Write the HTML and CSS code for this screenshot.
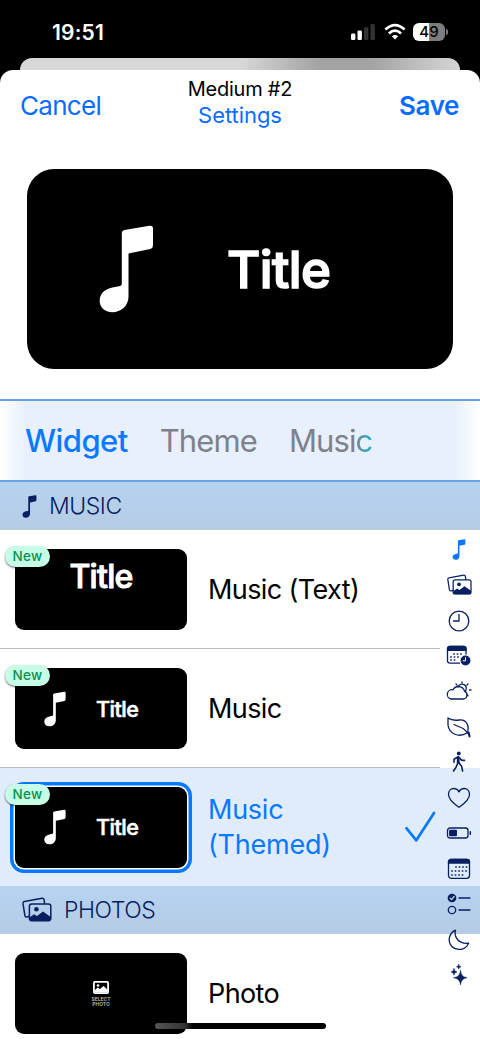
FILE: index.html
```html
<!DOCTYPE html>
<html lang="en">
<head>
<meta charset="utf-8">
<title>Widget settings</title>
<link rel="stylesheet" href="styles.css">
</head>
<body>
<svg class="defs" width="0" height="0">
  <symbol id="note" viewBox="298 194 164 262"><path fill="currentColor" d="M366 218Q366 211 374 209L448 196Q459 194 459 204V255Q459 263 451 265L386 279V408C386 436 363 454 338 454C315 454 300 440 300 420C300 398 315 384 338 380L361 376Q366 375 366 370Z"/></symbol>
  <symbol id="photos" viewBox="0 0 30 26">
    <path d="M7 19.5 4.6 20Q3.2 20.2 2.9 18.7L1 6.6Q.8 4.8 2.4 4.5L20 1.2Q21.6 1 22 2.5L22.6 6.2" fill="none" stroke="currentColor" stroke-width="1.5" stroke-linecap="round"/>
    <rect x="7.4" y="6.9" width="21.4" height="16.8" rx="2.4" fill="none" stroke="currentColor" stroke-width="1.5"/>
    <circle cx="14.4" cy="12.2" r="2.3" fill="currentColor"/>
    <path d="M7.5 20.5 12 17.2 15 19 21 14.5 28.8 20V22Q28.5 24 26.5 24H10Q7.5 24 7.5 21.5Z" fill="currentColor"/>
  </symbol>
</svg>
<div class="screen">
  <div class="status">
    <span class="clock">19:51</span>
    <div class="indicators">
      <svg width="26" height="18" viewBox="0 0 26 18"><rect x="1" y="10.5" width="4.4" height="6.5" rx="1.3" fill="#fff"/><rect x="7.5" y="7.5" width="4.4" height="9.5" rx="1.3" fill="#fff"/><rect x="14" y="4.3" width="4.4" height="12.7" rx="1.3" fill="#333"/><rect x="20.5" y="1" width="4.4" height="16" rx="1.3" fill="#333"/></svg>
      <svg width="22" height="18" viewBox="0 0 22 18" fill="none" stroke="#fff" stroke-width="2.7"><path d="M1.4 6.5Q11-2.2 20.6 6.5"/><path d="M4.9 10.4Q11 4.8 17.1 10.4"/><path d="M11 16.5 7.8 13.3Q11 10.6 14.2 13.3Z" fill="#fff" stroke="none"/></svg>
      <div class="battery"><span class="level">49</span><i></i></div>
    </div>
  </div>
  <div class="backsheet"></div>
  <main class="sheet">
    <header class="nav">
      <span class="cancel">Cancel</span>
      <div class="heading"><span class="size">Medium #2</span><span class="settings">Settings</span></div>
      <span class="save">Save</span>
    </header>
    <section class="hero">
      <svg class="heronote" width="55" height="88"><use href="#note"/></svg>
      <span class="herotitle">Title</span>
    </section>
    <nav class="tabs"><span class="on">Widget</span><span class="theme">Theme</span><span class="music">Musi<b>c</b></span></nav>
    <h2 class="section"><svg class="sn" width="15" height="23"><use href="#note"/></svg><span class="stitle">MUSIC</span></h2>
    <div class="row">
      <div class="thumb textonly"><span>Title</span><em class="badge">New</em></div>
      <span class="label l1">Music (Text)</span>
    </div>
    <div class="row">
      <div class="thumb"><svg class="tn" width="22" height="36"><use href="#note"/></svg><span class="tt">Title</span><em class="badge">New</em></div>
      <span class="label">Music</span>
    </div>
    <div class="row selected">
      <div class="thumb"><svg class="tn" width="22" height="36"><use href="#note"/></svg><span class="tt">Title</span><em class="badge">New</em></div>
      <span class="label">Music<br>(Themed)</span>
      <svg class="check" width="32" height="32" viewBox="0 0 32 32"><path d="M2.4 17.2 12.3 29.3 30 2" fill="none" stroke="#0a78ff" stroke-width="2.7" stroke-linecap="round" stroke-linejoin="round"/></svg>
    </div>
    <h2 class="section"><svg width="30" height="26"><use href="#photos"/></svg><span class="stitle wide">PHOTOS</span></h2>
    <div class="row last">
      <div class="thumb photo">
        <svg width="16" height="13" viewBox="0 0 16 13"><rect x=".9" y=".9" width="14.2" height="11.2" rx="1" fill="none" stroke="#fff" stroke-width="1.8"/><circle cx="5" cy="4.5" r="1.3" fill="#fff"/><path d="M1.5 9.5 4.6 6.6 7 8 10.5 5 14.5 8.5V11.5H1.5Z" fill="#fff"/></svg>
        <small>SELECT<br>PHOTO</small>
      </div>
      <span class="label">Photo</span>
    </div>
  </main>
  <aside class="rail">
    <div><svg class="blue" width="14" height="21"><use href="#note"/></svg></div>
    <div><svg width="25" height="22"><use href="#photos"/></svg></div>
    <div><svg width="22" height="22" viewBox="0 0 22 22"><circle cx="11" cy="11" r="9.8"/><path d="M11 4.5V11H5.5"/></svg></div>
    <div><svg width="26" height="22" viewBox="0 0 26 22"><path d="M13.5 18.2H4Q1.5 18.2 1.5 15.8V4Q1.5 1.5 4 1.5H17.5Q20 1.5 20 4V9"/><path class="f" d="M1.5 5.3V3.8Q1.5 1.3 4 1.3H17.5Q20 1.3 20 3.8V5.3Z"/><path class="dots" d="M8 9H18M5 12H14M5 15H12"/><circle class="f" cx="19.5" cy="15.5" r="4.3"/><path d="M19.5 12.7V15.8H17" stroke="#fff" stroke-width="1"/></svg></div>
    <div><svg width="26" height="20" viewBox="0 0 26 20"><path d="M5 18H17.5A4.1 4.1 0 0 0 18.5 10.2A6.2 6.2 0 0 0 7 8.8A4.7 4.7 0 0 0 5 18Z"/><path d="M12 6A4.3 4.3 0 1 1 19.5 10M16 1V2M22 3 21 4M25 9H23.6M22 14.8 21 13.8M10 3 11 4"/></svg></div>
    <div><svg width="26" height="22" viewBox="0 0 26 22"><path d="M2 2Q6 5 13 4C21 3 24 11 21 17C13 22 3 18 2 9Z"/><path d="M8 8.5Q11 10 15 11.5T23.5 19.5"/><path d="m22.7 16.5.8 4" stroke-width="2"/></svg></div>
    <div><svg width="16" height="22" viewBox="0 0 16 22"><circle class="f" cx="7.8" cy="2.4" r="1.3"/><path d="M7.3 6.4 7.2 11.6" stroke-width="2.8"/><path d="M6.4 6.2 3 8.3V11.3M8.7 7 10.6 9.1 13.5 9.4M6.7 12.2 5.2 16 2.5 20M8 12 10.6 15.2 11.6 20" stroke-width="1.6"/></svg></div>
    <div><svg width="24" height="22" viewBox="0 0 24 22"><path d="M12 20.3C8 17.5 1.5 13.2 1.5 7.5C1.5 4 3.7 1.5 6.8 1.5C9.2 1.5 11 2.9 12 4.9C13 2.9 14.8 1.5 17.2 1.5C20.3 1.5 22.5 4 22.5 7.5C22.5 13.2 16 17.5 12 20.3Z"/></svg></div>
    <div><svg width="26" height="14" viewBox="0 0 26 14"><rect x="1.5" y="2" width="20.5" height="10" rx="2.5"/><rect class="f" x="3.8" y="4.3" width="6.5" height="5.4" rx=".4"/><path d="M24.3 5.7V8.3" stroke-width="1.5"/></svg></div>
    <div><svg width="24" height="22" viewBox="0 0 24 22"><rect x="1.5" y="1.3" width="21" height="19" rx="2.8"/><path class="f" d="M1.5 5V4Q1.5 1.5 4 1.5H20Q22.5 1.5 22.5 4V5Z"/><path class="dots" d="M9 9H20M5 13H20M5 17H16"/></svg></div>
    <div><svg width="24" height="22" viewBox="0 0 24 22"><circle class="f" cx="5" cy="5" r="3.7"/><path d="m3.2 5.2 1.4 1.4L7 3.5" stroke="#b6d0ec"/><circle cx="5" cy="17" r="3.7"/><path d="M12 5H23M12 17H23"/></svg></div>
    <div><svg width="22" height="22" viewBox="0 0 22 22"><path d="M7.5 1.2C5.5 8.3 11 15.3 20.6 14.2C18.5 19 14 20.8 9.5 20.2C2.8 19.2-.2 12.7 1.8 7.2C2.9 4.2 4.9 2.3 7.5 1.2Z"/></svg></div>
    <div><svg width="18" height="22" viewBox="0 0 18 22"><path class="f star" d="M10.5 6.5Q11 13 17 13.7Q11 14.4 10.5 21Q10 14.4 3.5 13.7Q10 13 10.5 6.5ZM4 4.5Q4.3 7.5 7 7.9Q4.3 8.3 4 11.2Q3.7 8.3 1 7.9Q3.7 7.5 4 4.5ZM8.7.5Q8.9 2.5 11 2.8Q8.9 3.1 8.7 5Q8.5 3.1 6.5 2.8Q8.5 2.5 8.7.5Z"/></svg></div>
  </aside>
  <div class="home"></div>
</div>
</body>
</html>
```
FILE: styles.css
```css
* { box-sizing: border-box; }
body { margin: 0; background: #fff; font-family: Inter, "Liberation Sans", sans-serif; }
.defs { position: absolute; }
svg { display: block; flex: none; }
.screen { position: relative; width: 480px; height: 1039px; overflow: hidden; background: #000; display: flex; flex-direction: column; }
.status { height: 58px; flex: none; display: flex; justify-content: space-between; padding: 20px 32px 0 52px; color: #fff; }
.clock { font-size: 21px; line-height: 25px; font-weight: 600; letter-spacing: 0.2px; }
.indicators { display: flex; align-items: flex-start; padding-top: 3px; gap: 7px; }
.battery { display: flex; align-items: center; height: 18px; }
.level { width: 32px; height: 18px; border-radius: 6px; background: linear-gradient(90deg, #fff 50%, #7d7d7d 50%); color: #000; font-size: 15px; line-height: 18px; font-weight: 500; text-align: center; }
.battery i { width: 2px; height: 6px; margin-left: 1px; border-radius: 0 2px 2px 0; background: #777; }
.indicators svg:first-child { margin-right: 1px; }
.backsheet { height: 12px; flex: none; margin: 0 20px; border-radius: 13px 13px 0 0; background: linear-gradient(90deg, #d8d8d8 0 50%, #a3a3a3 68% 80%, #bebebe 90%, #d5d5d5); }
.sheet { flex: 1; background: #fff; border-radius: 13px 13px 0 0; display: flex; flex-direction: column; overflow: hidden; }
.nav { height: 99px; flex: none; display: grid; grid-template-columns: 120px 1fr 120px; color: #0a6cff; line-height: 36px; padding: 0 20px; }
.cancel { font-size: 26px; letter-spacing: -0.7px; padding-top: 18px; font-weight: 400; }
.save { font-size: 26px; letter-spacing: -0.4px; padding: 18px 1px 0 0; text-align: right; font-weight: 600; }
.heading { display: flex; flex-direction: column; align-items: center; padding-top: 6px; }
.size { color: #000; font-size: 20px; line-height: 26px; font-weight: 400; letter-spacing: -0.25px; white-space: nowrap; }
.settings { font-size: 22px; line-height: 27px; letter-spacing: -0.05px; font-weight: 400; }
.hero { width: 426px; height: 200px; flex: none; margin: 0 27px 30px; border-radius: 27px; background: #000; color: #fff; display: flex; align-items: center; padding-left: 72px; }
.herotitle { margin-left: 73px; font-size: 51px; font-weight: 500; letter-spacing: -0.6px; line-height: 60px; padding-top: 1px; -webkit-text-stroke: 1.6px #fff; stroke-linejoin: round; }
.tabs { height: 83px; flex: none; border: solid #62a3e2; border-width: 2px 0; display: flex; align-items: center; gap: 32px; padding-left: 25px; background: linear-gradient(90deg, #fff, #f5f9fe 10px, #e7f0fc 26px, #e7f0fc 454px, #f5f9fe 470px, #fff); font-size: 31px; color: #7d828b; white-space: nowrap; font-weight: 400; letter-spacing: -0.9px; }
.tabs .on { color: #0a78ff; font-weight: 500; letter-spacing: -0.55px; }
.tabs b { font-weight: inherit; background: linear-gradient(90deg, #718b98, #20b2c5); background-clip: text; color: transparent; }
.section { height: 48px; flex: none; margin: 0; padding-left: 22px; display: flex; align-items: center; gap: 12px; color: #08205f; font-size: 23px; font-weight: 300; letter-spacing: -0.45px; background: linear-gradient(#b5d3f1, #b6cbe4); }
.row { height: 119px; flex: none; display: flex; align-items: center; padding-left: 15px; background: linear-gradient(#b8b8bb, #b8b8bb) 0 100% / 440px 1px no-repeat; }
.selected { height: 118px; background: #e0ecfa; color: #0a78ff; }
.last { background: none; }
.thumb { position: relative; width: 172px; height: 81px; flex: none; border-radius: 9px; background: #000; color: #fff; display: flex; align-items: center; padding-left: 29px; }
.tt { margin-left: 30px; font-size: 21.5px; font-weight: 500; letter-spacing: -0.5px; -webkit-text-stroke: 0.6px #fff; }
.textonly { justify-content: center; align-items: flex-start; padding: 8px 0 0; font-size: 32px; line-height: 40px; font-weight: 500; letter-spacing: -0.7px; -webkit-text-stroke: 1px #fff; }
.badge { position: absolute; left: -10px; top: -3px; width: 45px; height: 21px; border-radius: 11px; background: #c7fce6; color: #099050; font: 500 13.5px/21px Inter, sans-serif; letter-spacing: 0.3px; text-align: center; -webkit-text-stroke: 0; box-shadow: 0 1px 2px #0009; }
.selected .thumb { box-shadow: 0 0 0 1.5px #fff, 0 0 0 5px #0a78ff; }
.label { margin-left: 21px; width: 190px; font-size: 27px; line-height: 35px; font-weight: 400; letter-spacing: -0.6px; }
.selected .label { letter-spacing: -0.25px; }
.check { margin-left: 6px; }
.photo { flex-direction: column; justify-content: center; padding: 0; gap: 3px; }
.photo small { font-size: 4.9px; line-height: 5px; font-weight: 800; text-align: center; color: #999; }
.rail { position: absolute; right: 0; top: 532px; width: 42px; color: #0a2060; display: flex; flex-direction: column; }
.rail div { height: 35.45px; display: flex; align-items: center; justify-content: center; }
.rail svg { fill: none; stroke: currentColor; stroke-width: 1.3; stroke-linecap: round; stroke-linejoin: round; }
.rail svg:has(use) { stroke: none; }
.rail .blue { color: #0a78ff; }
.rail .f { fill: currentColor; }
.rail .star { stroke-width: .5; }
.rail .dots { stroke-width: 1.6; stroke-dasharray: 0 3.5; stroke-linecap: square; }
.home { position: absolute; left: 155px; top: 1023px; width: 171px; height: 6px; border-radius: 3px; background: linear-gradient(90deg, #555, #333 30px, #000 38px); }
```
